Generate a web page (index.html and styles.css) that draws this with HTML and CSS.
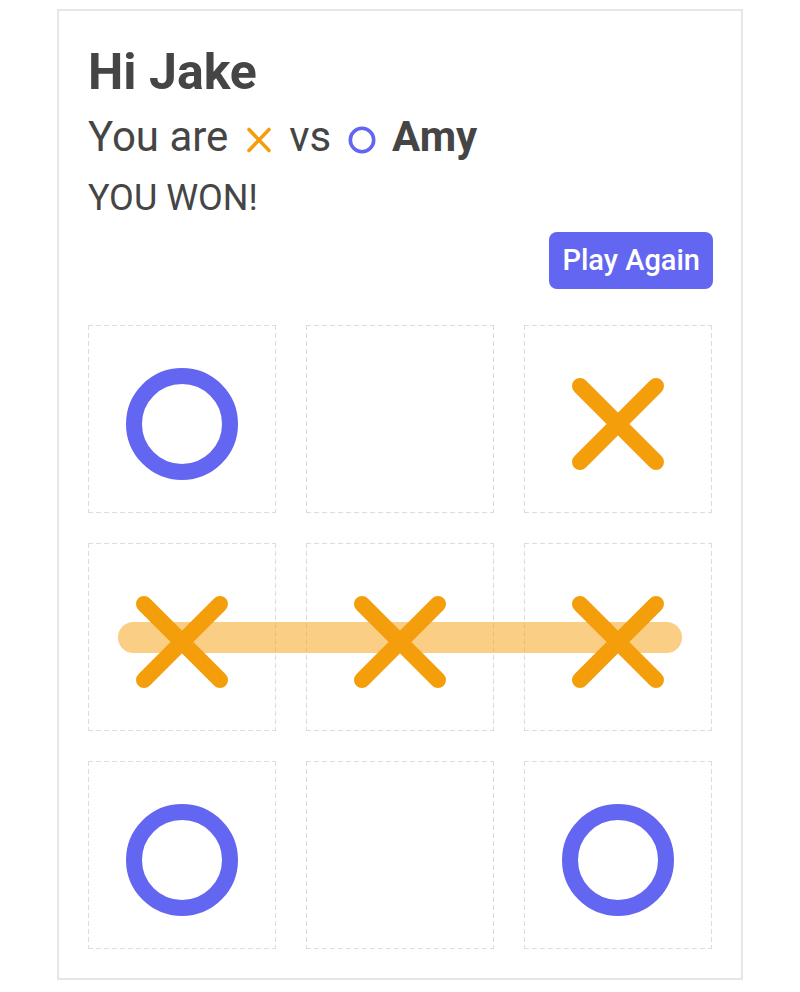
FILE: index.html
```html
<!DOCTYPE html>
<html lang="en">
<head>
<meta charset="utf-8">
<title>Tic Tac Toe</title>
<link rel="stylesheet" href="styles.css">
</head>
<body>
<main class="card">
  <h1 class="greeting">Hi Jake</h1>
  <p class="matchup">You are <svg class="mini" viewBox="0 0 40 40"><path d="M10 9.5 L30 30.5 M30 9.5 L10 30.5" class="x-stroke"/></svg> vs <svg class="mini" viewBox="0 0 40 40"><circle cx="20" cy="20" r="11.7" class="o-stroke"/></svg> <strong>Amy</strong></p>
  <p class="status">YOU WON!</p>
  <div class="actions"><button class="play">Play Again</button></div>
  <div class="board">
    <div class="cell"><svg class="mark" viewBox="0 0 120 120"><circle cx="60" cy="60" r="48" class="o-big"/></svg></div>
    <div class="cell"></div>
    <div class="cell"><svg class="mark" viewBox="0 0 120 120"><path d="M22 22 L98 98 M98 22 L22 98" class="x-big"/></svg></div>
    <div class="cell"><svg class="mark" viewBox="0 0 120 120"><path d="M22 22 L98 98 M98 22 L22 98" class="x-big"/></svg></div>
    <div class="cell"><svg class="mark" viewBox="0 0 120 120"><path d="M22 22 L98 98 M98 22 L22 98" class="x-big"/></svg></div>
    <div class="cell"><svg class="mark" viewBox="0 0 120 120"><path d="M22 22 L98 98 M98 22 L22 98" class="x-big"/></svg></div>
    <div class="cell"><svg class="mark" viewBox="0 0 120 120"><circle cx="60" cy="60" r="48" class="o-big"/></svg></div>
    <div class="cell"></div>
    <div class="cell"><svg class="mark" viewBox="0 0 120 120"><circle cx="60" cy="60" r="48" class="o-big"/></svg></div>
    <div class="strike"></div>
  </div>
</main>
</body>
</html>
```

FILE: styles.css
```css
html, body {
  margin: 0;
  padding: 0;
  background: #ffffff;
}
body {
  font-family: Roboto, "Liberation Sans", Arial, sans-serif;
  color: #454545;
  padding-top: 9px;
}
.card {
  box-sizing: border-box;
  width: 686px;
  margin: 0 auto;
  border: 2px solid #e6e6e6;
  padding: 30px 29px 29px 29px;
  display: flex;
  flex-direction: column;
}
.greeting {
  margin: 1px 0 0 0;
  font-size: 50px;
  font-weight: 700;
  line-height: 1.2;
}
.matchup {
  margin: 10px 0 0 0;
  font-size: 42px;
  line-height: 1.2;
  font-weight: 400;
}
.matchup strong {
  font-weight: 700;
}
.mini {
  width: 40px;
  height: 40px;
  vertical-align: middle;
}
.x-stroke {
  stroke: #f59e0b;
  stroke-width: 3.6;
  stroke-linecap: round;
  fill: none;
}
.o-stroke {
  stroke: #6366f1;
  stroke-width: 3.6;
  fill: none;
}
.status {
  margin: 15px 0 0 0;
  font-size: 36px;
  line-height: 1.2;
  font-weight: 400;
}
.actions {
  display: flex;
  justify-content: flex-end;
  margin-top: 11px;
}
.play {
  height: 57px;
  padding: 0 13px;
  margin-right: -1px;
  border: none;
  border-radius: 8px;
  background: #6366f1;
  color: #ffffff;
  font-family: Roboto, "Liberation Sans", Arial, sans-serif;
  font-size: 29px;
  font-weight: 500;
}
.board {
  position: relative;
  margin-top: 36px;
  display: grid;
  grid-template-columns: repeat(3, 188px);
  grid-auto-rows: 188px;
  gap: 30px;
}
.cell {
  box-sizing: border-box;
  display: flex;
  align-items: center;
  justify-content: center;
  padding-top: 10px;
  background:
    repeating-linear-gradient(90deg, #dcdcdc 0 5px, transparent 5px 8px) left top / 100% 1px no-repeat,
    repeating-linear-gradient(90deg, #dcdcdc 0 5px, transparent 5px 8px) left bottom / 100% 1px no-repeat,
    repeating-linear-gradient(180deg, #dcdcdc 0 5px, transparent 5px 8px) left top / 1px 100% no-repeat,
    repeating-linear-gradient(180deg, #dcdcdc 0 5px, transparent 5px 8px) right top / 1px 100% no-repeat;
}
.mark {
  width: 120px;
  height: 120px;
}
.o-big {
  fill: none;
  stroke: #6366f1;
  stroke-width: 16;
}
.x-big {
  fill: none;
  stroke: #f59e0b;
  stroke-width: 16;
  stroke-linecap: round;
}
.strike {
  position: absolute;
  left: 30px;
  right: 30px;
  top: 297px;
  height: 31px;
  border-radius: 16px;
  background: rgba(245, 158, 11, 0.5);
}
```
